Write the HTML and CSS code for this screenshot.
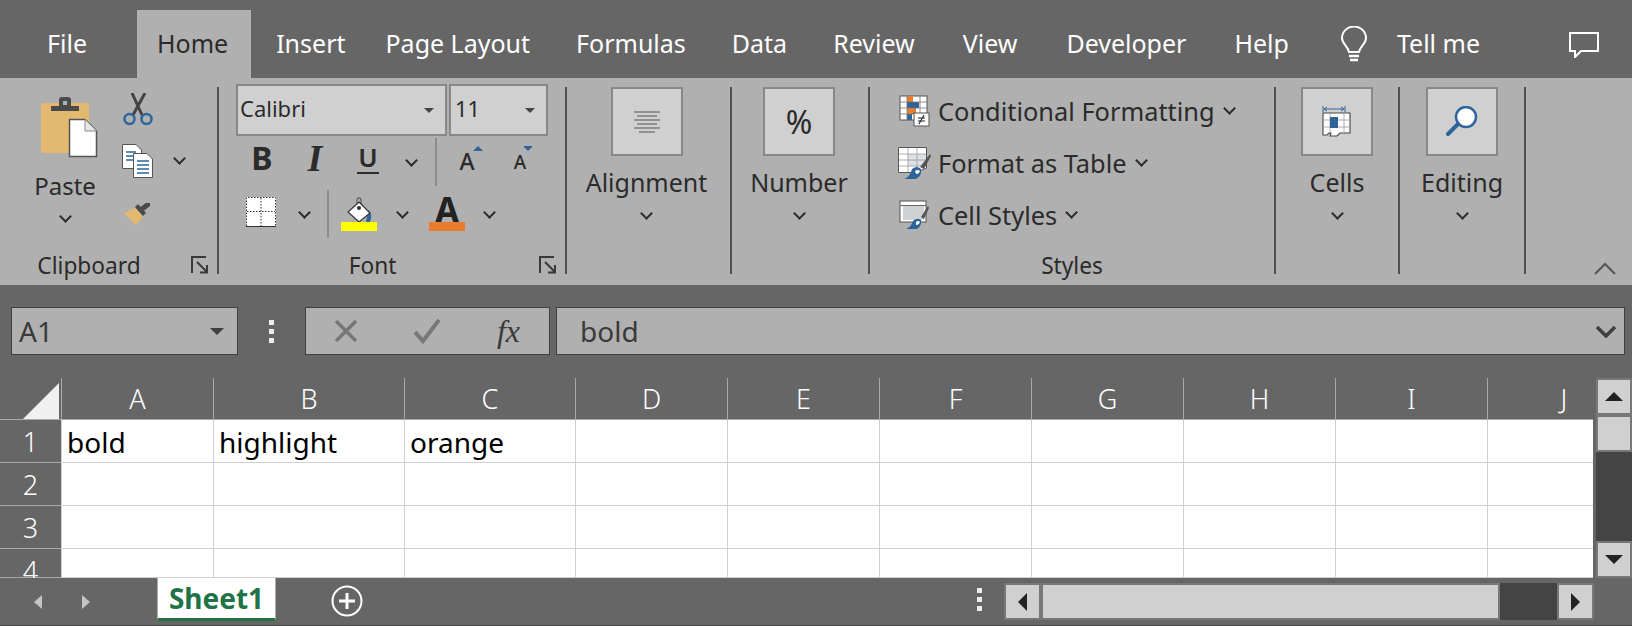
FILE: index.html
```html
<!DOCTYPE html>
<html lang="en">
<head>
    <meta charset="UTF-8">
    <title>Book1 - Excel</title>
    <link rel="stylesheet" href="styles.css">
</head>
<body>

<div class="tabs">
    <span class="tab file-tab">File</span>
    <span class="tab active">Home</span>
    <span class="tab tab-insert">Insert</span>
    <span class="tab">Page Layout</span>
    <span class="tab">Formulas</span>
    <span class="tab">Data</span>
    <span class="tab tab-review">Review</span>
    <span class="tab tab-view">View</span>
    <span class="tab tab-developer">Developer</span>
    <span class="tab">Help</span>
    <svg class="bulb" width="26" height="37" viewBox="0 0 26 37" fill="none" stroke="#fff" stroke-width="2">
        <path d="M8 26 C7 20 1 18 1 12 A12 11.500 0 0 1 25 12 C25 18 19 20 18 26 Z"/>
        <path d="M8 30 H18 M9 34 H17" stroke-width="2.500"/>
    </svg>
    <span class="tell">Tell me</span>
    <svg class="comment" width="30" height="26" viewBox="0 0 30 26" fill="none" stroke="#fff" stroke-width="2">
        <path d="M1 1 H29 V19 H12 L6 25 V19 H1 Z"/>
    </svg>
</div>

<div class="ribbon">
    <div class="group clipboard">
        <div class="group-body clip-body">
            <div class="paste">
                <svg class="paste-icon" width="58" height="64" viewBox="0 0 58 64">
                    <rect x="0" y="9" width="48" height="50" rx="2" fill="#e2b96e"/>
                    <path d="M10 17 V12 H18 V6 Q18 3 21 3 H27 Q30 3 30 6 V12 H38 V17 Z" fill="#4a4a4a"/>
                    <rect x="22" y="7" width="4" height="4" fill="#b0b0b0"/>
                    <path d="M28.500 25.500 H44 L55.500 37 V62.500 H28.500 Z" fill="#fff" stroke="#555" stroke-width="1.500"/>
                    <path d="M44 25.500 V37 H55.500" fill="#e6e6e6" stroke="#888"/>
                </svg>
                <span class="paste-label">Paste</span>
                <i class="chev paste-chev"></i>
            </div>
            <div class="clip-tools">
                <svg class="cut" width="30" height="33" viewBox="0 0 30 33" fill="none">
                    <path d="M9 0 L19 22 M22 0 L10 22" stroke="#444" stroke-width="3"/>
                    <circle cx="6.500" cy="26" r="5" stroke="#2e6499" stroke-width="2.500"/>
                    <circle cx="23.500" cy="26" r="5" stroke="#2e6499" stroke-width="2.500"/>
                </svg>
                <div class="copy-row">
                    <svg width="31" height="34" viewBox="0 0 31 34">
                        <path d="M0.500 0.500 H14 L19.500 6 V24.500 H0.500 Z" fill="#fff" stroke="#555"/>
                        <path d="M4 8 H14 M4 12 H14 M4 16 H14" stroke="#2e6499" stroke-width="1.300"/>
                        <path d="M11.500 9.500 H25 L30.500 15 V33.500 H11.500 Z" fill="#fff" stroke="#555"/>
                        <path d="M15 17 H27 M15 21 H27 M15 25 H27 M15 29 H27" stroke="#2e6499" stroke-width="1.300"/>
                    </svg>
                    <i class="chev copy-chev"></i>
                </div>
                <svg class="brush" width="26" height="23" viewBox="0 0 26 23">
                    <path d="M0 10 L11 5 L19 14 L12 22 Z" fill="#e2b96e"/>
                    <path d="M11 4 L14 1 L22 10 L19 13 Z" fill="#4a4a4a"/>
                    <path d="M18 6 L24 1.500" stroke="#4a4a4a" stroke-width="5" stroke-linecap="round"/>
                </svg>
            </div>
        </div>
        <div class="group-foot">
            <span class="group-label">Clipboard</span>
            <svg class="launcher" width="18" height="18" viewBox="0 0 18 18" fill="none" stroke="#3a3a3a" stroke-width="2">
                <path d="M1 17 V1 H15 M6 6 L16 16 M16 9 V16.500 H9"/>
            </svg>
        </div>
    </div>

    <div class="sep"></div>

    <div class="group font">
        <div class="group-body font-body">
            <div class="font-row combos">
                <div class="combo font-name"><span>Calibri</span><i class="tri"></i></div>
                <div class="combo font-size"><span>11</span><i class="tri"></i></div>
            </div>
            <div class="font-row">
                <span class="fbtn b52 bold-b">B</span>
                <span class="fbtn b54 italic-i">I</span>
                <span class="fbtn b52"><span class="under-u">U</span></span>
                <span class="fbtn b34 row-chev"><i class="chev"></i></span>
                <span class="thin-sep"></span>
                <span class="fbtn b46 grow-a">A<i class="up-tri"></i></span>
                <span class="fbtn b60 shrink-a">A<i class="down-tri"></i></span>
            </div>
            <div class="font-row">
                <span class="fbtn b52 row-chev">
                    <svg class="borders-icon" width="30" height="30" viewBox="0 0 30 30">
                        <rect x="0" y="0" width="30" height="29" fill="#fff"/>
                        <path d="M0.500 29 V0.500 H29.500 V29 M15 1 V29 M1 14.500 H29" fill="none" stroke="#333" stroke-dasharray="1.500 1.500"/>
                        <path d="M0 29.500 H30" stroke="#333"/>
                    </svg>
                </span>
                <span class="fbtn b32 row-chev"><i class="chev"></i></span>
                <span class="thin-sep"></span>
                <span class="fbtn b46 color-btn">
                    <svg width="36" height="25" viewBox="0 0 36 25">
                        <path d="M16 7 V3 Q16 1 18 1 Q20 1 20 3 V10" fill="none" stroke="#666" stroke-width="1.300"/>
                        <path d="M27 13 Q32 16 29 25 H25 Z" fill="#2e6499"/>
                        <path d="M18 5 L29 16 L18 25 L7 15 Z" fill="#fff" stroke="#333" stroke-width="1.200"/>
                        <circle cx="18" cy="11" r="2" fill="#333"/>
                    </svg>
                    <i class="swatch yellow"></i>
                </span>
                <span class="fbtn b32 after-color row-chev"><i class="chev"></i></span>
                <span class="fbtn b56 color-btn a-btn">
                    <span class="color-a">A</span>
                    <i class="swatch orange"></i>
                </span>
                <span class="fbtn b32 row-chev"><i class="chev"></i></span>
            </div>
        </div>
        <div class="group-foot">
            <span class="group-label">Font</span>
            <svg class="launcher" width="18" height="18" viewBox="0 0 18 18" fill="none" stroke="#3a3a3a" stroke-width="2">
                <path d="M1 17 V1 H15 M6 6 L16 16 M16 9 V16.500 H9"/>
            </svg>
        </div>
    </div>

    <div class="sep"></div>

    <div class="group big alignment">
        <div class="big-box">
            <svg width="26" height="22" viewBox="0 0 26 22" stroke="#555" stroke-width="1.200">
                <path d="M0 1 H26 M3 5 H23 M0 9 H26 M3 13 H23 M0 17 H26 M5 21 H21"/>
            </svg>
        </div>
        <span class="big-label">Alignment</span>
        <i class="chev big-chev"></i>
    </div>

    <div class="sep"></div>

    <div class="group big number">
        <div class="big-box percent">%</div>
        <span class="big-label">Number</span>
        <i class="chev big-chev"></i>
    </div>

    <div class="sep"></div>

    <div class="group styles">
        <div class="group-body style-rows">
            <div class="style-row">
                <svg width="32" height="32" viewBox="0 0 32 32">
                    <rect x="1" y="1" width="27" height="24" fill="#fff" stroke="#555"/>
                    <rect x="8" y="1" width="6" height="6" fill="#e87d2f"/>
                    <rect x="8" y="7" width="12" height="6" fill="#2e6499"/>
                    <rect x="8" y="13" width="9" height="6" fill="#e87d2f"/>
                    <rect x="8" y="19" width="5" height="6" fill="#2e6499"/>
                    <path d="M1 7 H28 M1 13 H28 M1 19 H28 M8 1 V25 M21 1 V25" stroke="#777" stroke-width="0.800"/>
                    <rect x="15" y="18" width="15" height="13" fill="#fff" stroke="#555"/>
                    <path d="M19 23 H26 M19 26 H26 M25 20 L20 29" stroke="#222" stroke-width="1.100"/>
                </svg>
                <span>Conditional Formatting</span>
                <i class="chev style-chev"></i>
            </div>
            <div class="style-row">
                <svg width="34" height="33" viewBox="0 0 34 33">
                    <path d="M0.500 0.500 H28.500 V21 L18 25.500 H0.500 Z" fill="#fff" stroke="#555"/>
                    <rect x="10" y="7" width="18" height="12" fill="#dde1e7"/>
                    <path d="M1 7 H28 M1 13 H28 M1 19 H24 M10 1 V25 M19 1 V24" stroke="#999" stroke-width="0.800"/>
                    <path d="M22 20 L32 7 L33 9 L26 22 Z" fill="#555"/>
                    <path d="M6 32 Q12 30 14 22 Q19 18 23 22 Q24 29 18 32 Z" fill="#2e6499"/>
                    <path d="M17 24 Q20 22 22 24 Q21 27 18 27 Z" fill="#fff"/>
                </svg>
                <span>Format as Table</span>
                <i class="chev style-chev"></i>
            </div>
            <div class="style-row">
                <svg width="32" height="30" viewBox="0 0 32 30">
                    <rect x="1" y="1" width="26" height="21" fill="#fff" stroke="#555"/>
                    <rect x="4" y="6" width="21" height="14" fill="#cfd1d3"/>
                    <path d="M1 5.500 H27" stroke="#666"/>
                    <path d="M22 17 L29 6 L30 8 L25 19 Z" fill="#555"/>
                    <path d="M7 29 Q12 27 14 21 Q18 17 22 20 Q23 26 18 29 Z" fill="#2e6499"/>
                    <path d="M17 22 Q19 20 21 22 Q20 25 17 25 Z" fill="#fff"/>
                </svg>
                <span>Cell Styles</span>
                <i class="chev style-chev"></i>
            </div>
        </div>
        <div class="group-foot">
            <span class="group-label">Styles</span>
        </div>
    </div>

    <div class="sep"></div>

    <div class="group big cells">
        <div class="big-box">
            <svg width="30" height="32" viewBox="0 0 30 32" fill="none">
                <path d="M1 0 V6 M23 0 V6 M2 3 H22 M5 1 L2 3 L5 5 M19 1 L22 3 L19 5" stroke="#2e6499"/>
                <path d="M1 7 H28 V27 H18 L15 30 H8 L9 27 H7 L5 29 H1 Z" fill="#fff" stroke="#444" stroke-width="1.100"/>
                <path d="M8 7 V27 M22 7 V27 M1 14 H28 M1 21 H28" stroke="#999" stroke-width="0.800"/>
                <rect x="8" y="11" width="8" height="11" fill="#2e6499"/>
            </svg>
        </div>
        <span class="big-label">Cells</span>
        <i class="chev big-chev"></i>
    </div>

    <div class="sep"></div>

    <div class="group big editing">
        <div class="big-box">
            <svg width="32" height="32" viewBox="0 0 32 32" fill="none">
                <circle cx="20" cy="11" r="10" fill="#fff" stroke="#2e6499" stroke-width="2.500"/>
                <path d="M12 18 L2 28" stroke="#2e6499" stroke-width="4" stroke-linecap="round"/>
            </svg>
        </div>
        <span class="big-label">Editing</span>
        <i class="chev big-chev"></i>
    </div>

    <div class="sep"></div>

    <div class="collapse">
        <svg width="22" height="13" viewBox="0 0 22 13" fill="none" stroke="#555" stroke-width="2">
            <path d="M1 12 L11 2 L21 12"/>
        </svg>
    </div>
</div>

<div class="formula-bar">
    <div class="name-box"><span>A1</span><i class="name-tri"></i></div>
    <div class="vdots"><i></i><i></i><i></i></div>
    <div class="fx-box">
        <svg class="cancel" width="24" height="24" viewBox="0 0 24 24" fill="none" stroke="#777" stroke-width="3.500"><path d="M2 2 L22 22 M22 2 L2 22"/></svg>
        <svg width="26" height="26" viewBox="0 0 26 26" fill="none" stroke="#777" stroke-width="4"><path d="M1 14 L9 23 L25 2"/></svg>
        <span class="fx">fx</span>
    </div>
    <div class="formula-input">
        <span>bold</span>
        <svg width="20" height="13" viewBox="0 0 20 13" fill="none" stroke="#3f3f3f" stroke-width="3.500"><path d="M1 2 L10 11 L19 2"/></svg>
    </div>
</div>

<div class="sheet-area">
    <div class="grid">
        <div class="corner"><svg width="36" height="36" viewBox="0 0 36 36"><path d="M36 0 V36 H0 Z" fill="#f0f0f0"/></svg></div>
        <div class="col-head">A</div>
        <div class="col-head">B</div>
        <div class="col-head">C</div>
        <div class="col-head">D</div>
        <div class="col-head">E</div>
        <div class="col-head">F</div>
        <div class="col-head">G</div>
        <div class="col-head">H</div>
        <div class="col-head">I</div>
        <div class="col-head last-head"><span>J</span></div>

        <div class="row-head">1</div>
        <div class="cell">bold</div>
        <div class="cell">highlight</div>
        <div class="cell">orange</div>
        <div class="cell"></div><div class="cell"></div><div class="cell"></div><div class="cell"></div><div class="cell"></div><div class="cell"></div><div class="cell"></div>

        <div class="row-head">2</div>
        <div class="cell"></div><div class="cell"></div><div class="cell"></div><div class="cell"></div><div class="cell"></div><div class="cell"></div><div class="cell"></div><div class="cell"></div><div class="cell"></div><div class="cell"></div>

        <div class="row-head">3</div>
        <div class="cell"></div><div class="cell"></div><div class="cell"></div><div class="cell"></div><div class="cell"></div><div class="cell"></div><div class="cell"></div><div class="cell"></div><div class="cell"></div><div class="cell"></div>

        <div class="row-head">4</div>
        <div class="cell"></div><div class="cell"></div><div class="cell"></div><div class="cell"></div><div class="cell"></div><div class="cell"></div><div class="cell"></div><div class="cell"></div><div class="cell"></div><div class="cell"></div>
    </div>
    <div class="vscroll">
        <div class="sbtn"><i class="arrow-up"></i></div>
        <div class="sthumb"></div>
        <div class="strack"></div>
        <div class="sbtn"><i class="arrow-down"></i></div>
    </div>
</div>

<div class="sheet-bar">
    <i class="nav-left"></i>
    <i class="nav-right"></i>
    <div class="sheet-tab">Sheet1</div>
    <svg class="add-sheet" width="32" height="32" viewBox="0 0 32 32" fill="none" stroke="#fff">
        <circle cx="16" cy="16" r="14.500" stroke-width="2"/>
        <path d="M16 8 V24 M8 16 H24" stroke-width="3"/>
    </svg>
    <div class="vdots bar-dots"><i></i><i></i><i></i></div>
    <div class="hscroll">
        <div class="hbtn"><i class="arrow-left"></i></div>
        <div class="hthumb"></div>
        <div class="htrack"></div>
        <div class="hbtn"><i class="arrow-right"></i></div>
    </div>
</div>

</body>
</html>
```

FILE: styles.css
```css
* {
    box-sizing: border-box;
}
body {
    margin: 0;
    width: 1632px;
    height: 626px;
    overflow: hidden;
    background-color: #666;
    font-family: "Noto Sans", "Open Sans", sans-serif;
    color: #2b2b2b;
}
i {
    display: block;
}

/* tabs */
.tabs {
    display: flex;
    height: 78px;
    padding-left: 24px;
    color: #fff;
    font-size: 25px;
}
.tab {
    height: 68px;
    margin-top: 10px;
    padding: 16px 23px 0;
    white-space: nowrap;
}
.file-tab {
    margin-right: 27px;
}
.active {
    background-color: #b0b0b0;
    color: #2b2b2b;
    padding: 16px 23px 0 20px;
}
.tab-insert {
    padding: 16px 17px 0 25px;
}
.tab-review {
    padding-right: 25px;
}
.tab-view {
    padding-right: 26px;
}
.tab-developer {
    padding-right: 25px;
}
.bulb {
    margin: 26px 0 0 29px;
}
.tell {
    margin: 26px 0 0 30px;
}
.comment {
    margin: 32px 0 0 89px;
}

/* ribbon */
.ribbon {
    display: flex;
    height: 207px;
    background-color: #b0b0b0;
}
.sep {
    width: 2px;
    height: 187px;
    margin-top: 9px;
    background-color: #505050;
}
.group {
    display: flex;
    flex-direction: column;
    font-size: 22.700px;
}
.group-body {
    height: 168px;
}
.group-foot {
    display: flex;
    align-items: center;
    height: 38px;
}
.group-label {
    flex: 1;
    text-align: center;
}
.launcher {
    margin: 0 8px 0 13px;
}
.chev {
    width: 9px;
    height: 9px;
    border-right: 2px solid #2b2b2b;
    border-bottom: 2px solid #2b2b2b;
    transform: rotate(45deg);
}

/* clipboard */
.clipboard {
    width: 217px;
}
.clip-body {
    display: flex;
}
.paste {
    display: flex;
    flex-direction: column;
    align-items: center;
    width: 122px;
    padding-left: 8px;
}
.paste-icon {
    margin-top: 16px;
    margin-left: 9px;
}
.paste-label {
    margin-top: 11px;
    font-size: 24px;
}
.paste-chev {
    margin-top: 10px;
}
.clip-tools {
    display: flex;
    flex-direction: column;
    align-items: flex-start;
    width: 95px;
}
.cut {
    margin-top: 15px;
    margin-left: 1px;
}
.copy-row {
    display: flex;
    align-items: center;
    margin-top: 18px;
}
.copy-chev {
    margin-left: 22px;
    margin-bottom: 5px;
}
.brush {
    margin-top: 25px;
    margin-left: 2px;
}

/* font */
.font {
    width: 346px;
}
.font-body {
    padding-left: 17px;
}
.font-row {
    display: flex;
    align-items: center;
    height: 48px;
    margin-bottom: 4px;
}
.combos {
    height: 52px;
    margin-top: 6px;
    margin-bottom: 2px;
    gap: 2px;
}
.combo {
    display: flex;
    align-items: center;
    justify-content: space-between;
    height: 52px;
    padding: 0 11px 4px 2px;
    border: 2px solid #888;
    background-color: #d0d0d0;
    font-size: 22px;
}
.combo .tri {
    margin-top: 4px;
}
.font-name {
    width: 211px;
}
.font-size {
    width: 99px;
    padding-left: 4px;
}
.tri {
    width: 0;
    height: 0;
    border-left: 5px solid transparent;
    border-right: 5px solid transparent;
    border-top: 5px solid #444;
}
.fbtn {
    position: relative;
    display: flex;
    align-items: center;
    justify-content: center;
    height: 48px;
    flex-shrink: 0;
}
.row-chev {
    padding-bottom: 4px;
}
.b32 { width: 32px; }
.b34 { width: 34px; }
.b46 { width: 46px; }
.b52 { width: 52px; }
.b54 { width: 54px; }
.b56 { width: 56px; }
.b60 { width: 60px; }
.bold-b {
    padding-bottom: 9px;
    font-size: 32px;
    font-weight: 700;
}
.italic-i {
    padding-bottom: 9px;
    font-family: "Liberation Serif", serif;
    font-size: 38px;
    font-style: italic;
    font-weight: 700;
}
.under-u {
    margin-bottom: 8px;
    padding: 0 1px;
    line-height: 30px;
    border-bottom: 2px solid #2b2b2b;
    font-size: 26px;
    font-weight: 600;
}
.thin-sep {
    width: 2px;
    height: 48px;
    margin: 0 7px;
    background-color: #8c8c8c;
}
.grow-a {
    font-size: 23px;
    font-weight: 500;
    padding-bottom: 2px;
}
.shrink-a {
    font-size: 19px;
    font-weight: 500;
    padding-bottom: 1px;
}
.up-tri, .down-tri {
    position: absolute;
    top: 8px;
    right: 7px;
    border-left: 5px solid transparent;
    border-right: 5px solid transparent;
}
.up-tri {
    border-bottom: 5px solid #2e6499;
}
.down-tri {
    right: 17px;
    top: 8px;
    border-top: 5px solid #2e6499;
}
.borders-icon {
    margin-right: 2px;
}
.color-btn {
    flex-direction: column;
    justify-content: flex-start;
    padding-top: 7px;
}
.a-btn {
    margin: 0 -2px 0 1px;
}
.after-color {
    margin-left: 4px;
}
.swatch {
    width: 36px;
    height: 9px;
}
.yellow {
    background-color: #ffff00;
}
.orange {
    background-color: #e87d2f;
}
.color-a {
    height: 25px;
    line-height: 25px;
    font-size: 35px;
    font-weight: 700;
    color: #222;
}

/* big buttons */
.big {
    align-items: center;
    padding-right: 2px;
}
.alignment {
    width: 163px;
    padding-right: 4px;
}
.number {
    width: 136px;
}
.cells {
    width: 122px;
    padding-right: 0;
}
.editing {
    width: 124px;
    padding-right: 0;
}
.big-box {
    display: flex;
    align-items: center;
    justify-content: center;
    width: 72px;
    height: 69px;
    margin-top: 9px;
    border: 2px solid #888;
    background-color: #d0d0d0;
}
.percent {
    font-size: 32px;
}
.big-label {
    margin-top: 9px;
    font-size: 25px;
}
.big-chev {
    margin-top: 10px;
}

/* styles */
.styles {
    width: 404px;
}
.style-rows {
    padding: 7px 0 0 28px;
}
.style-row {
    display: flex;
    align-items: center;
    height: 52px;
    font-size: 25.400px;
    white-space: nowrap;
}
.style-row svg {
    width: 34px;
    margin-right: 6px;
}
.style-chev {
    margin: 0 0 6px 10px;
}
.collapse {
    flex: 1;
    display: flex;
    justify-content: flex-end;
    align-items: flex-end;
    padding: 0 16px 10px 0;
}

/* formula bar */
.formula-bar {
    display: flex;
    height: 93px;
    padding: 22px 7px 23px 11px;
}
.name-box, .fx-box, .formula-input {
    display: flex;
    align-items: center;
    height: 48px;
    border: 1px solid #404040;
    background-color: #b0b0b0;
    font-size: 28px;
    color: #3a3a3a;
}
.name-box {
    justify-content: space-between;
    width: 227px;
    padding: 0 13px 0 7px;
}
.name-tri {
    border-left: 7px solid transparent;
    border-right: 7px solid transparent;
    border-top: 7px solid #3f3f3f;
}
.vdots {
    display: flex;
    flex-direction: column;
    justify-content: center;
    gap: 4px;
    width: 67px;
    align-items: center;
}
.vdots i {
    width: 5px;
    height: 5px;
    background-color: #eee;
}
.fx-box {
    justify-content: space-between;
    width: 245px;
    margin-right: 6px;
    padding: 0 29px 0 28px;
}
.cancel {
    margin-bottom: 1px;
}
.fx {
    font-family: "Liberation Serif", serif;
    font-size: 32px;
    font-style: italic;
}
.formula-input {
    flex: 1;
    justify-content: space-between;
    padding: 0 8px 0 23px;
}

/* sheet */
.sheet-area {
    display: flex;
    height: 200px;
}
.grid {
    display: grid;
    grid-template-columns: 61px 152px 191px 171px repeat(6, 152px) 106px;
    grid-template-rows: 42px repeat(3, 43px) 29px;
    width: 1593px;
    height: 200px;
    overflow: hidden;
    background-color: #fff;
}
.corner {
    background-color: #666;
    border-bottom: 1px solid #aaa;
    padding: 5px 0 0 23px;
}
.col-head {
    display: flex;
    align-items: center;
    justify-content: center;
    background-color: #666;
    border-left: 1px solid #aaa;
    border-bottom: 1px solid #aaa;
    color: #fff;
    font-size: 27px;
    font-weight: 300;
}
.last-head {
    overflow: hidden;
    justify-content: flex-start;
}
.last-head span {
    flex-shrink: 0;
    width: 152px;
    text-align: center;
}
.row-head {
    background-color: #666;
    border-bottom: 1px solid #aaa;
    color: #fff;
    font-size: 27px;
    font-weight: 300;
    line-height: 44px;
    text-align: center;
}
.cell {
    padding-left: 5px;
    border-left: 1px solid #d0d0d0;
    border-bottom: 1px solid #d0d0d0;
    color: #000;
    font-size: 28px;
    line-height: 44px;
    white-space: nowrap;
}
.vscroll {
    display: flex;
    flex-direction: column;
    width: 36px;
    margin-left: 3px;
}
.sbtn {
    display: flex;
    align-items: center;
    justify-content: center;
    height: 37px;
    border: 2px solid #777;
    background-color: #d0d0d0;
}
.sthumb {
    height: 37px;
    border: 2px solid #777;
    background-color: #d0d0d0;
}
.strack {
    flex: 1;
    background-color: #444;
}
.arrow-up, .arrow-down {
    border-left: 9px solid transparent;
    border-right: 9px solid transparent;
}
.arrow-up {
    border-bottom: 9px solid #222;
}
.arrow-down {
    border-top: 9px solid #222;
}

/* bottom bar */
.sheet-bar {
    display: flex;
    align-items: flex-start;
    height: 48px;
    border-bottom: 1px solid #444;
}
.nav-left, .nav-right {
    margin-top: 17px;
    border-top: 7px solid transparent;
    border-bottom: 7px solid transparent;
}
.nav-left {
    margin-left: 34px;
    border-right: 8px solid #c4c4c4;
}
.nav-right {
    margin-left: 40px;
    border-left: 8px solid #c4c4c4;
}
.sheet-tab {
    width: 119px;
    height: 43px;
    margin-left: 67px;
    border-left: 1px solid #aaa;
    border-right: 1px solid #aaa;
    border-bottom: 3px solid #217346;
    background-color: #fff;
    color: #217346;
    font-size: 28px;
    font-weight: 700;
    line-height: 40px;
    text-align: center;
}
.add-sheet {
    margin: 7px 0 0 55px;
}
.bar-dots {
    margin: 10px 0 0 606px;
    width: 20px;
}
.hscroll {
    display: flex;
    width: 590px;
    height: 37px;
    margin: 5px 0 0 15px;
}
.hbtn {
    display: flex;
    align-items: center;
    justify-content: center;
    width: 37px;
    border: 2px solid #777;
    background-color: #d0d0d0;
}
.hthumb {
    width: 459px;
    border: 2px solid #777;
    background-color: #d0d0d0;
}
.htrack {
    flex: 1;
    background-color: #444;
}
.arrow-left, .arrow-right {
    border-top: 9px solid transparent;
    border-bottom: 9px solid transparent;
}
.arrow-left {
    border-right: 9px solid #222;
}
.arrow-right {
    border-left: 9px solid #222;
}
```
